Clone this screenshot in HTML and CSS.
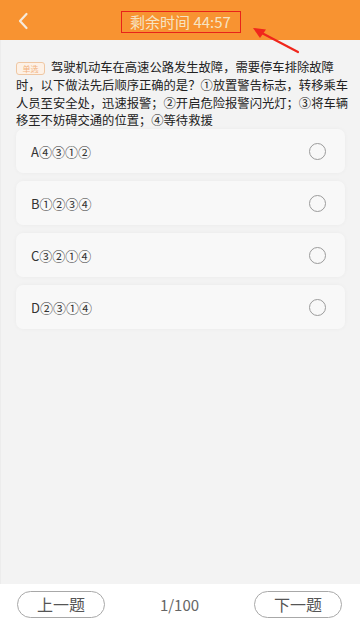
FILE: index.html
```html
<!DOCTYPE html>
<html lang="zh">
<head>
<meta charset="utf-8">
<link rel="stylesheet" href="styles.css">
</head>
<body>
<div class="page">
  <header class="topbar">
    <span class="back">
      <svg width="12" height="18" viewBox="0 0 12 18"><path d="M9.5 2 L3 9 L9.5 16" fill="none" stroke="#f6eadb" stroke-width="2.2" stroke-linecap="round" stroke-linejoin="round"/></svg>
    </span>
    <div class="title">剩余时间 44:57</div>
  </header>
  <svg class="pointer" width="60" height="40" viewBox="0 0 60 40">
    <path d="M46 25 L6 4" stroke="#f0261c" stroke-width="2.2" stroke-linecap="round"/>
    <path d="M1 1 L14 2.5 L8 11 Z" fill="#f0261c"/>
  </svg>
  <main class="content">
    <div class="question">
      <span class="tag">单选</span>
      <p class="qtext">驾驶机动车在高速公路发生故障，需要停车排除故障<br>时，以下做法先后顺序正确的是？①放置警告标志，转移乘车<br>人员至安全处，迅速报警；②开启危险报警闪光灯；③将车辆<br>移至不妨碍交通的位置；④等待救援</p>
    </div>
    <ul class="options">
      <li class="option"><span>A④③①②</span><i class="radio"></i></li>
      <li class="option"><span>B①②③④</span><i class="radio"></i></li>
      <li class="option"><span>C③②①④</span><i class="radio"></i></li>
      <li class="option"><span>D②③①④</span><i class="radio"></i></li>
    </ul>
  </main>
  <footer class="bottombar">
    <button class="nav">上一题</button>
    <span class="count">1/100</span>
    <button class="nav">下一题</button>
  </footer>
</div>
</body>
</html>
```

FILE: styles.css
```css
* { box-sizing: border-box; }
html, body { margin: 0; padding: 0; }
body {
  font-family: "Noto Sans CJK SC", "Noto Sans", sans-serif;
  background: #f3f3f3;
}
.page {
  position: relative;
  width: 360px;
  height: 624px;
  display: flex;
  flex-direction: column;
  overflow: hidden;
}
.topbar {
  height: 40px;
  background: #f89331;
  display: flex;
  align-items: center;
  justify-content: center;
  position: relative;
  flex: none;
}
.back {
  position: absolute;
  left: 17px;
  top: 12px;
  display: flex;
}
.title {
  margin-left: 1px;
  margin-top: 4px;
  width: 120px;
  height: 22px;
  border: 1.5px solid #e8231a;
  color: #f6e4c3;
  font-size: 15px;
  line-height: 19px;
  text-align: center;
  white-space: nowrap;
}
.pointer {
  position: absolute;
  left: 252px;
  top: 27px;
}
.content {
  flex: 1;
  background: #f3f3f3;
  padding: 19px 15px 0 15px;
  border-left: 1px solid #ececec;
}
.question {
  position: relative;
}
.tag {
  position: absolute;
  left: 0;
  top: 3px;
  width: 29px;
  height: 13px;
  border: 1px solid #efc7a3;
  border-radius: 3px;
  background: #fdf1e6;
  color: #f2b27e;
  font-size: 8px;
  line-height: 11px;
  text-align: center;
}
.qtext {
  margin: 0;
  text-indent: 35px;
  font-size: 12.3px;
  line-height: 17.8px;
  color: #222;
  white-space: nowrap;
}
.options {
  list-style: none;
  margin: -1px 0 0 0;
  padding: 0;
  display: flex;
  flex-direction: column;
  gap: 8px;
  width: 329px;
}
.option {
  height: 44px;
  background: #f8f8f8;
  border-radius: 7px;
  box-shadow: 0 0 4px rgba(0,0,0,0.04);
  display: flex;
  align-items: center;
  justify-content: space-between;
  padding: 0 19px 0 15px;
  font-size: 13px;
  color: #333;
}
.radio {
  width: 17px;
  height: 17px;
  border: 1.6px solid #9b9b9b;
  border-radius: 50%;
}
.bottombar {
  height: 40px;
  background: #fff;
  flex: none;
  display: flex;
  align-items: center;
  justify-content: space-between;
  padding: 0 18px 0 17px;
}
.nav {
  width: 88px;
  height: 27px;
  border: 1px solid #a8a8a8;
  border-radius: 14px;
  background: #fff;
  color: #555;
  font-family: "Noto Sans CJK SC", sans-serif;
  font-size: 16px;
  padding: 0;
  line-height: 25px;
}
.count {
  color: #666;
  font-size: 15px;
}
```
